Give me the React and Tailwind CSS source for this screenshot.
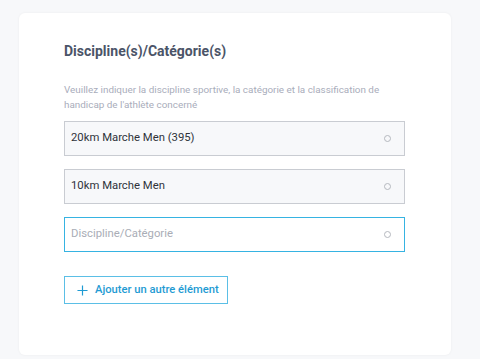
import React from 'react';

const fields = [
  { value: '20km Marche Men (395)' },
  { value: '10km Marche Men' },
  { value: '', placeholder: 'Discipline/Catégorie', focused: true },
];

const App = () => {
  return (
    <div className="min-h-[359px] bg-[#f7f8fa] pt-[13px] pl-[19px] pr-[29px] font-['Roboto',sans-serif]">
      <div className="h-[342px] bg-white rounded-md shadow-[0_0_3px_rgba(0,0,0,0.05)] pl-[45px] pr-[45px] pt-[29px]">
        {/* Header */}
        <h2 className="text-[14px] leading-[18px] font-bold text-[#4b5468]">
          Discipline(s)/Catégorie(s)
        </h2>
        <p className="mt-[22px] text-[9.9px] leading-[15px] text-[#a9adbb] w-[330px]">
          Veuillez indiquer la discipline sportive, la catégorie et la classification de handicap de l'athlète concerné
        </p>

        {/* Fields */}
        <div className="mt-[9px] w-[341px] flex flex-col gap-[13px]">
          {fields.map((f, i) => (
            <div
              key={i}
              className={`h-[35px] flex items-center justify-between pl-[6px] pr-[13px] border ${
                f.focused ? 'bg-white border-[#36b3e2]' : 'bg-[#f7f8fa] border-[#c9ccd2]'
              }`}
            >
              <span className={`text-[11.3px] ${f.value ? 'text-[#2f333a]' : 'text-[#a9adb6]'}`}>
                {f.value || f.placeholder}
              </span>
              <span className="w-[7px] h-[7px] rounded-full border border-[#b5b8be]" />
            </div>
          ))}
        </div>

        {/* Add button */}
        <button className="mt-[24px] h-[28px] w-[164px] flex items-center gap-[7px] pl-[12px] border border-[#5bbfe6] text-[#1f9bd3] text-[11.2px] font-medium whitespace-nowrap">
          <svg width="11" height="11" viewBox="0 0 12 12" fill="none" stroke="currentColor" strokeWidth="1.3">
            <path d="M6 0.5v11M0.5 6h11" />
          </svg>
          Ajouter un autre élément
        </button>
      </div>
    </div>
  );
};

export default App;
